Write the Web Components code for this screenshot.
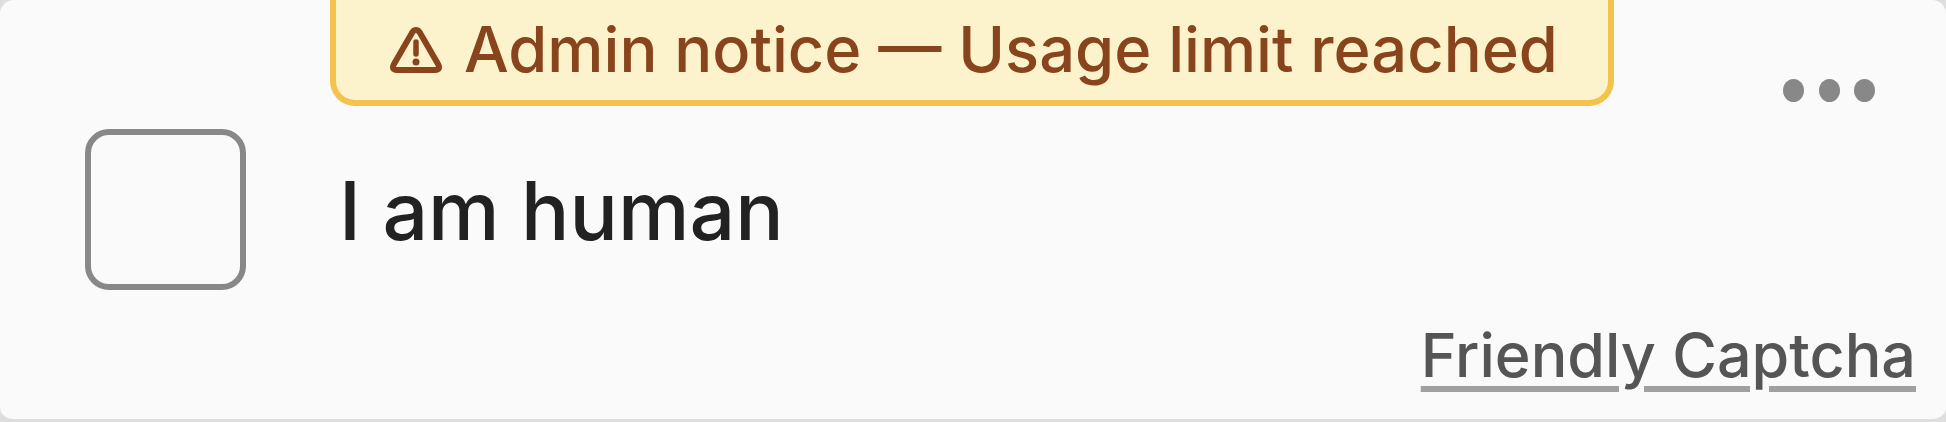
<!DOCTYPE html>
<html><head><meta charset="utf-8"><style>
html,body{margin:0;padding:0;background:#dedede;overflow:hidden}
</style></head><body>
<captcha-widget>
<notice-banner slot="banner">Admin notice — Usage limit reached</notice-banner>
<menu-dots slot="menu"></menu-dots>
<check-box slot="check"></check-box>
<span slot="label">I am human</span>
<a slot="footer">Friendly Captcha</a>
</captcha-widget>
<script>
function def(name,html){customElements.define(name,class extends HTMLElement{constructor(){super();this.attachShadow({mode:'open'}).innerHTML=html}})}
def('notice-banner',`<style>
:host{display:flex;align-items:center;box-sizing:border-box;height:106px;border:6px solid #f4c24d;border-top:0;border-radius:0 0 25px 25px;background:#fcf3cc;color:#88441c;font:550 63.200px/1 Inter,sans-serif;font-variation-settings:"opsz" 14;padding:0 0 0 53px;gap:21px;white-space:nowrap}
svg{width:54px;height:50px;flex:none}
</style><svg viewBox="0 0 54 50" fill="none" stroke="currentColor" stroke-width="6" stroke-linejoin="round" stroke-linecap="round"><path d="M27 5 Q29 5 30.500 7 L49 39 Q52 45 46 45 L8 45 Q2 45 5 39 L23.500 7 Q25 5 27 5Z"/><path d="M27 17 V29" stroke-width="5.500"/><circle cx="27" cy="37" r="3.500" fill="currentColor" stroke="none"/></svg><slot></slot>`);
def('menu-dots',`<style>
:host{display:flex;gap:14.500px;align-self:end;margin:0 41px 4px auto}
i{display:block;width:21px;height:23px;border-radius:50%;background:#888}
</style><i></i><i></i><i></i>`);
def('check-box',`<style>
:host{display:block;box-sizing:border-box;width:161px;height:161px;border:6px solid #888;border-radius:24px}
</style>`);
def('captcha-widget',`<style>
:host{display:grid;box-sizing:border-box;width:1946px;height:422px;grid-template-columns:161px 1fr;grid-template-rows:106px 161px auto;column-gap:84px;row-gap:23px;padding:0 30px 0 85px;background:#fafafa;border-bottom:3px solid #dedede;border-radius:14px;font-family:Inter,sans-serif;overflow:hidden}
.top{grid-column:2;display:flex}
.top ::slotted([slot=banner]){flex:none;width:1284px}
.label{display:flex;align-items:center;padding:4px 0 0 9px;color:#222;font:550 80.500px/1 Inter,sans-serif;font-variation-settings:"opsz" 14}
.foot{grid-column:1/3;display:flex;justify-content:flex-end;margin-top:6px}
.foot ::slotted(a){color:#555;font:470 61px/1.2 Inter,sans-serif;font-variation-settings:"opsz" 14;text-decoration:underline;text-decoration-color:#a0a0a0;text-decoration-thickness:6px;text-underline-offset:9px}
</style>
<div class="top"><slot name="banner"></slot><slot name="menu"></slot></div>
<slot name="check"></slot>
<div class="label"><slot name="label"></slot></div>
<div class="foot"><slot name="footer"></slot></div>`);
</script>
</body></html>
